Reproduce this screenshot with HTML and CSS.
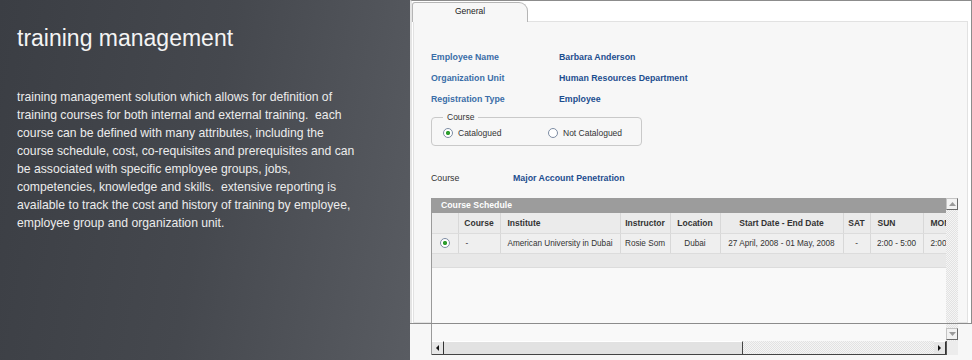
FILE: index.html
```html
<!DOCTYPE html>
<html lang="en">
<head>
    <meta charset="UTF-8">
    <meta name="viewport" content="width=device-width, initial-scale=1.0">
    <title>Training Management</title>
    <link rel="stylesheet" href="styles.css">
</head>
<body>
<div class="page">

    <!-- Texto de presentación -->
    <section class="intro">
        <h1>training management</h1>
        <p>training management solution which allows for definition of<br>
        training courses for both internal and external training.&nbsp; each<br>
        course can be defined with many attributes, including the<br>
        course schedule, cost, co-requisites and prerequisites and can<br>
        be associated with specific employee groups, jobs,<br>
        competencies, knowledge and skills.&nbsp; extensive reporting is<br>
        available to track the cost and history of training by employee,<br>
        employee group and organization unit.</p>
    </section>

    <!-- Captura de la aplicación -->
    <section class="app">
        <div class="frame">
            <div class="tabs">
                <div class="tab">General</div>
            </div>

            <div class="panel">
                <dl class="fields">
                    <div class="field"><dt>Employee Name</dt><dd>Barbara Anderson</dd></div>
                    <div class="field"><dt>Organization Unit</dt><dd>Human Resources Department</dd></div>
                    <div class="field"><dt>Registration Type</dt><dd>Employee</dd></div>
                </dl>

                <fieldset class="choice">
                    <legend>Course</legend>
                    <div class="options">
                        <label class="option"><span class="radio on"></span>Catalogued</label>
                        <label class="option"><span class="radio"></span>Not Catalogued</label>
                    </div>
                </fieldset>

                <div class="course-row">
                    <span class="course-label">Course</span>
                    <span class="course-value">Major Account Penetration</span>
                </div>

                <div class="grid">
                    <div class="view">
                        <div class="caption">Course Schedule</div>
                        <table>
                            <colgroup>
                                <col style="width:26px"><col style="width:42px"><col style="width:120px">
                                <col style="width:50px"><col style="width:50px"><col style="width:123px">
                                <col style="width:27px"><col style="width:53px"><col style="width:50px">
                            </colgroup>
                            <thead>
                                <tr>
                                    <th></th>
                                    <th>Course</th>
                                    <th class="left">Institute</th>
                                    <th>Instructor</th>
                                    <th>Location</th>
                                    <th>Start Date - End Date</th>
                                    <th>SAT</th>
                                    <th class="left">SUN</th>
                                    <th class="left">MON</th>
                                </tr>
                            </thead>
                            <tbody>
                                <tr>
                                    <td><span class="radio on"></span></td>
                                    <td class="left">-</td>
                                    <td>American University in Dubai</td>
                                    <td>Rosie Som</td>
                                    <td>Dubai</td>
                                    <td>27 April, 2008 - 01 May, 2008</td>
                                    <td>-</td>
                                    <td>2:00 - 5:00</td>
                                    <td class="left">2:00 - 5:00</td>
                                </tr>
                                <tr class="blank">
                                    <td colspan="9"></td>
                                </tr>
                            </tbody>
                        </table>
                    </div>

                    <div class="vscroll">
                        <span class="sbtn"><svg width="7" height="4" viewBox="0 0 7 4"><path d="M0 4L3.5 0L7 4z" fill="#9a9a9a"/></svg></span>
                        <span class="sbtn"><svg width="7" height="4" viewBox="0 0 7 4"><path d="M0 0L3.5 4L7 0z" fill="#9a9a9a"/></svg></span>
                    </div>

                    <div class="hscroll">
                        <span class="hbtn"><svg width="3" height="6" viewBox="0 0 3 6"><path d="M3 0L0 3L3 6z" fill="#111"/></svg></span>
                        <span class="thumb"></span>
                        <span class="track"></span>
                        <span class="hbtn"><svg width="3" height="6" viewBox="0 0 3 6"><path d="M0 0L3 3L0 6z" fill="#111"/></svg></span>
                    </div>

                    <div class="corner"></div>
                </div>
            </div>
        </div>
    </section>

</div>
</body>
</html>
```

FILE: styles.css
```css
* {
    box-sizing: border-box;
}

body {
    margin: 0;
    font-family: "Liberation Sans", Arial, sans-serif;
}

.page {
    display: flex;
    width: 972px;
    height: 360px;
    overflow: hidden;
}

/* Panel oscuro de la izquierda */
.intro {
    width: 410px;
    flex-shrink: 0;
    padding: 24px 0 0 17px;
    background: linear-gradient(100deg, #3b3e44 0%, #45484e 50%, #595c62 100%);
    color: #ececec;
}

.intro h1 {
    margin: 0;
    font-size: 23px;
    line-height: 28px;
    font-weight: normal;
    color: #f4f4f4;
}

.intro p {
    margin: 36px 0 0;
    font-size: 12.2px;
    line-height: 18px;
    white-space: nowrap;
}

/* Captura de la aplicación */
.app {
    flex: 1;
    background: #f7f7f7;
}

.frame {
    position: relative;
    height: 324px;
    border-top: 1px solid #8c8c8c;
    border-right: 1px solid #8c8c8c;
    border-left: 2px solid #e4e4e4;
    background: #fff;
}

.frame::after {
    content: "";
    position: absolute;
    left: -2px;
    right: -1px;
    bottom: 0;
    height: 1px;
    background: #8c8c8c;
    z-index: 2;
}

.tabs {
    display: flex;
    align-items: flex-start;
    height: 20px;
}

.tab {
    position: relative;
    z-index: 1;
    width: 116px;
    height: 20px;
    margin-top: 1px;
    border: 1px solid #b5b5b5;
    border-bottom: none;
    border-radius: 3px 9px 0 0;
    background: #f7f7f7;
    font-size: 8.5px;
    line-height: 17px;
    text-align: center;
    color: #222;
}

.panel {
    height: 302px;
    margin: 0 3px 0 1px;
    padding: 25px 0 0 17px;
    border: 1px solid #e2e2e2;
    background: #f7f7f7;
}

.fields {
    margin: 0;
}

.field {
    display: flex;
    height: 21px;
    line-height: 21px;
    font-size: 8.8px;
    font-weight: bold;
}

.field dt {
    width: 128px;
    color: #3a6ea8;
}

.field dd {
    margin: 0;
    color: #1d4e8f;
}

.choice {
    width: 211px;
    margin: 2px 0 0;
    padding: 0 10px 1px 11px;
    border: 1px solid #c9c9c9;
    border-radius: 4px;
}

.choice legend {
    padding: 0 4px;
    font-size: 8.5px;
    line-height: 10px;
    color: #333;
}

.options {
    display: flex;
    align-items: center;
    height: 22px;
    font-size: 8.5px;
    color: #333;
}

.option {
    display: flex;
    align-items: center;
    gap: 5px;
}

.option:first-child {
    width: 105px;
}

.radio {
    display: inline-block;
    width: 10px;
    height: 10px;
    border: 1px solid #7d8ca3;
    border-radius: 50%;
    background: #fff;
    vertical-align: middle;
}

.radio.on {
    background: radial-gradient(circle, #2f9e2f 0 1.8px, #fff 2.4px);
}

.course-row {
    display: flex;
    height: 20px;
    margin-top: 22px;
    line-height: 20px;
    font-size: 8.8px;
}

.course-label {
    width: 82px;
    color: #333;
}

.course-value {
    font-weight: bold;
    color: #1d4e8f;
}

/* Tabla de horarios */
.grid {
    display: grid;
    grid-template-columns: 514px 12px;
    grid-template-rows: 143px 14px;
    width: 527px;
    margin-top: 10px;
    border-left: 1px solid #9a9a9a;
}

.view {
    overflow: hidden;
    background: #f9f9f9;
}

.caption {
    height: 15px;
    padding-left: 9px;
    line-height: 15px;
    background: #9c9c9c;
    color: #fff;
    font-size: 8.7px;
    font-weight: bold;
}

table {
    width: 541px;
    border-collapse: collapse;
    table-layout: fixed;
    font-size: 8.2px;
    color: #333;
}

th, td {
    height: 20px;
    padding: 0;
    text-align: center;
    white-space: nowrap;
    overflow: hidden;
    border-right: 1px solid #d8d8d8;
    border-bottom: 1px solid #dcdcdc;
}

th {
    background: #ebebeb;
    font-size: 8.5px;
    font-weight: bold;
    color: #333;
}

td {
    background: #efefef;
}

th.left, td.left {
    text-align: left;
    padding-left: 7px;
}

.blank td {
    height: 14px;
    border-right: none;
    background: #e8e8e8;
}

.vscroll {
    display: flex;
    flex-direction: column;
    justify-content: space-between;
    padding-bottom: 1px;
    background: repeating-conic-gradient(#e2e2e2 0 25%, #f5f5f5 0 50%) 0 0 / 2px 2px;
}

.sbtn {
    display: flex;
    align-items: center;
    justify-content: center;
    width: 12px;
    height: 12px;
    border: 1px solid #c4c4c4;
    border-right-color: #6a6a6a;
    border-bottom-color: #6a6a6a;
    background: #f2f2f2;
}

.hscroll {
    display: flex;
    border-bottom: 1px solid #444;
    background: repeating-conic-gradient(#e2e2e2 0 25%, #f5f5f5 0 50%) 0 0 / 2px 2px;
}

.hbtn {
    display: flex;
    align-items: center;
    justify-content: center;
    width: 12px;
    border-top: 1px solid #fff;
    border-right: 1px solid #333;
    background: #e6e6e6;
}

.thumb {
    width: 299px;
    border-top: 1px solid #fff;
    border-right: 1px solid #444;
    background: #e2e2e2;
}

.track {
    flex: 1;
}

.corner {
    background: #ececec;
    border-left: 1px solid #555;
}
```
